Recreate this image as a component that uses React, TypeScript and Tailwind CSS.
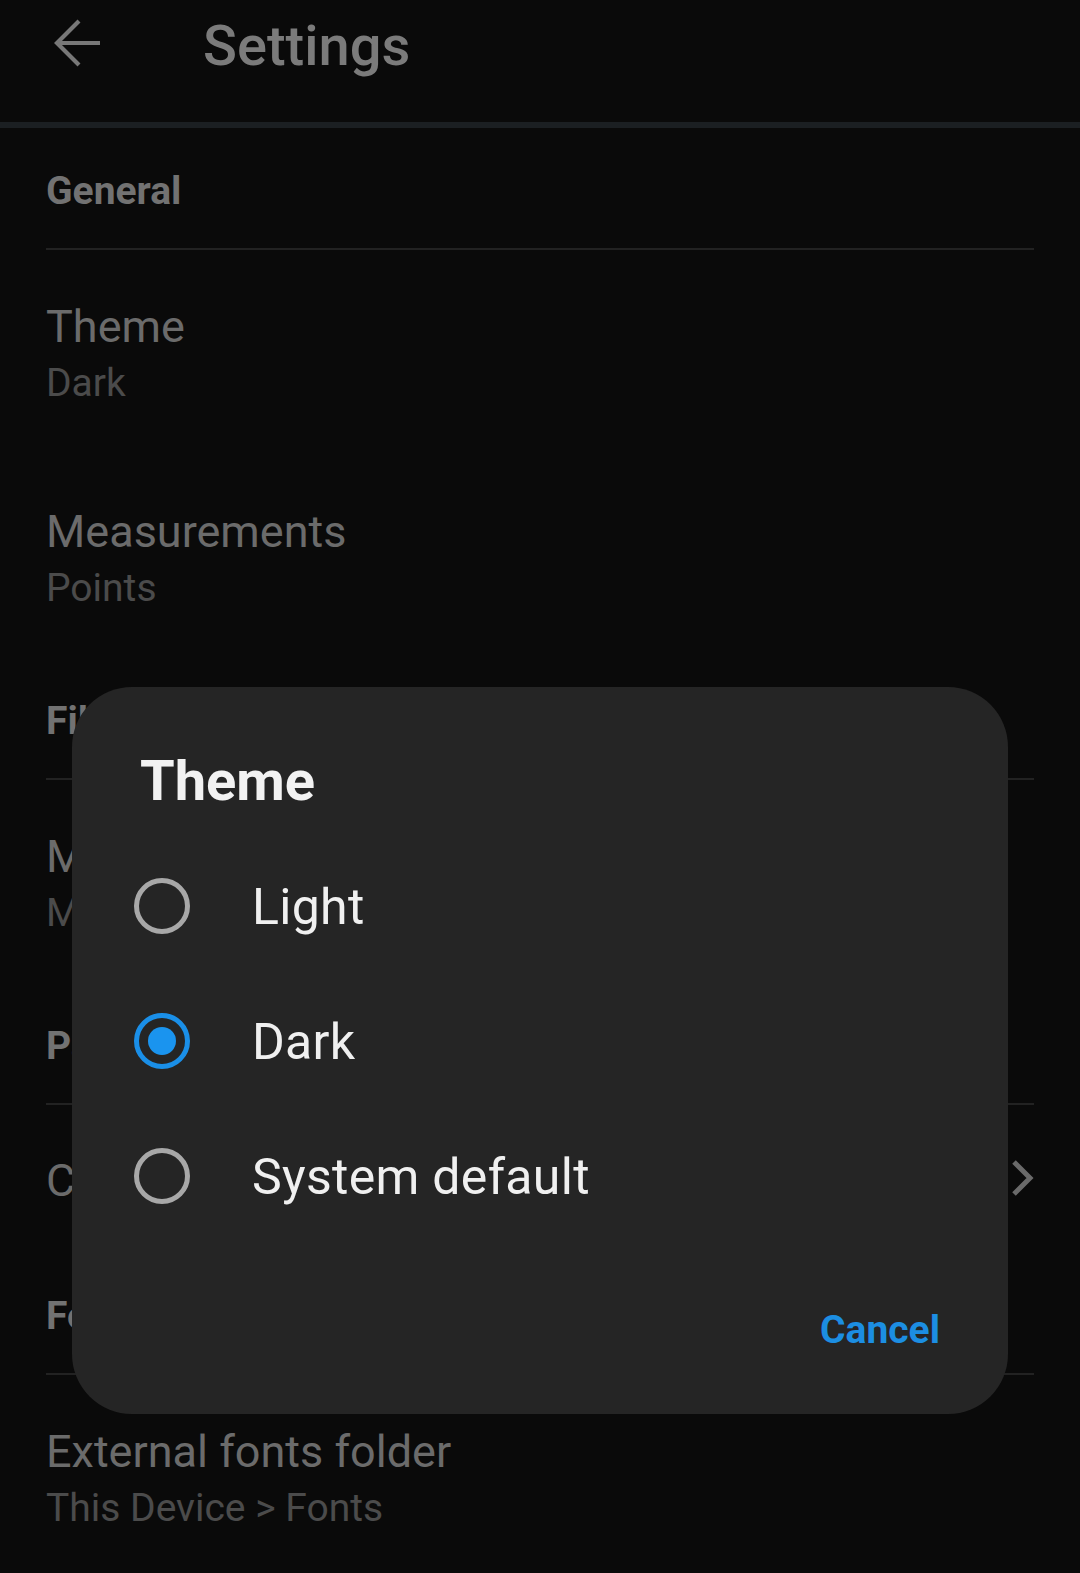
import React from "react";

type Row = { title: string; subtitle?: string; chevron?: boolean };
type Section = { header: string; rows: Row[] };

const sections: Section[] = [
  {
    header: "General",
    rows: [
      { title: "Theme", subtitle: "Dark" },
      { title: "Measurements", subtitle: "Points" },
    ],
  },
  {
    header: "Files",
    rows: [{ title: "My files", subtitle: "My Device" }],
  },
  {
    header: "Passcode",
    rows: [{ title: "Change", chevron: true }],
  },
  {
    header: "Fonts",
    rows: [{ title: "External fonts folder", subtitle: "This Device > Fonts" }],
  },
];

const themeOptions = ["Light", "Dark", "System default"];

function SettingRow({ row }: { row: Row }) {
  if (!row.subtitle) {
    return (
      <div className="flex h-[150px] items-center justify-between">
        <span className="text-[45px] leading-[53px] text-[#6b6b6b]">{row.title}</span>
        {row.chevron && (
          <svg width="26" height="38" viewBox="0 0 26 38" className="-mt-[4px]">
            <polyline
              points="6,3 22,19 6,35"
              fill="none"
              stroke="#6a6a6a"
              strokeWidth="5"
            />
          </svg>
        )}
      </div>
    );
  }
  return (
    <div className="flex h-[205px] flex-col pt-[50px]">
      <span className="text-[45px] leading-[53px] text-[#6b6b6b]">{row.title}</span>
      <span className="mt-[8px] text-[39px] leading-[44px] text-[#4b4b4b]">{row.subtitle}</span>
    </div>
  );
}

function Radio({ checked }: { checked: boolean }) {
  if (checked) {
    return (
      <div className="flex h-[56px] w-[56px] shrink-0 items-center justify-center rounded-full border-[5px] border-[#1a8fe8]">
        <div className="h-[28px] w-[28px] rounded-full bg-[#1a94ef]" />
      </div>
    );
  }
  return <div className="h-[56px] w-[56px] shrink-0 rounded-full border-[5px] border-[#a8a8a8]" />;
}

function ThemeDialog() {
  const selected = "Dark";
  return (
    <div className="absolute left-[72px] top-[687px] flex h-[727px] w-[936px] flex-col rounded-[60px] bg-[#252525] pt-[66px]">
      <h2 className="pl-[68px] text-[56px] font-bold leading-[56px] text-[#f2f2f2]">Theme</h2>
      <div className="mt-[29px] flex flex-col">
        {themeOptions.map((opt) => (
          <div key={opt} className="flex h-[135px] items-center pl-[62px]">
            <Radio checked={opt === selected} />
            <span className="ml-[62px] pt-[3px] text-[50px] leading-[50px] tracking-[0.3px] text-[#f0f0f0]">
              {opt}
            </span>
          </div>
        ))}
      </div>
      <div className="mt-[68px] flex justify-end pr-[68px]">
        <span className="text-[39px] font-bold leading-[39px] text-[#1c8ee2]">Cancel</span>
      </div>
    </div>
  );
}

export default function App() {
  return (
    <div
      className="relative h-[1573px] w-[1080px] overflow-hidden bg-[#0a0a0a]"
      style={{ fontFamily: "Roboto, 'Noto Sans', sans-serif" }}
    >
      {/* top bar */}
      <header className="flex h-[122px] items-start">
        <svg width="50" height="50" viewBox="0 0 50 50" className="ml-[53px] mt-[18px]">
          <path d="M4 25 H47 M26 3 L4 25 L26 47" fill="none" stroke="#787878" strokeWidth="4.2" />
        </svg>
        <h1 className="ml-[100px] mt-[18px] text-[56px] font-medium leading-[56px] text-[#7b7b7b]">
          Settings
        </h1>
      </header>
      <div className="h-[6px] bg-[#1b1f22]" />

      <div className="flex flex-col px-[46px] pt-[2px]">
        {sections.map((s) => (
          <div key={s.header} className="flex flex-col">
            <div className="h-[118px] pt-[42px]">
              <span className="text-[39px] font-bold leading-[39px] text-[#727272]">{s.header}</span>
            </div>
            <div className="h-[2px] bg-[#222222]" />
            {s.rows.map((r) => (
              <SettingRow key={r.title} row={r} />
            ))}
          </div>
        ))}
      </div>

      <ThemeDialog />
    </div>
  );
}
